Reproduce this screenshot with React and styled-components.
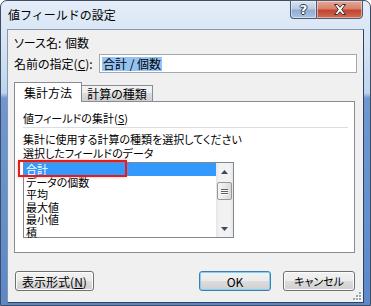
import React from 'react';
import styled, { createGlobalStyle } from 'styled-components';

const GlobalStyle = createGlobalStyle`
  html, body {
    margin: 0;
    padding: 0;
    background: #ffffff;
  }
  body {
    font-family: "Noto Sans CJK JP", "Noto Sans", sans-serif;
    font-size: 12px;
    color: #000000;
  }
`;

const Window = styled.div`
  box-sizing: border-box;
  width: 371px;
  height: 306px;
  display: flex;
  flex-direction: column;
  padding: 0 6px 7px;
  border: 1px solid #3e4d62;
  border-radius: 7px 7px 0 0;
  background: linear-gradient(
    to bottom,
    #e4edf8 0px,
    #d3e2f3 50px,
    #bdd3ee 92px,
    #6f98d2 97px,
    #5d88c8 100%
  );
`;

const TitleBar = styled.div`
  height: 28px;
  flex: none;
  display: flex;
  justify-content: space-between;
  align-items: flex-start;
`;

const Caption = styled.div`
  margin: 7px 0 0 1px;
  font-size: 12px;
  line-height: 14px;
  color: #000000;
`;

const Controls = styled.div`
  display: flex;
  margin: -1px 1px 0 0;
`;

const CaptionButton = styled.div`
  box-sizing: border-box;
  height: 19px;
  display: flex;
  align-items: center;
  justify-content: center;
  border: 1px solid #4b5b73;
  box-shadow: inset 0 0 0 1px rgba(255, 255, 255, 0.45);
`;

const HelpButton = styled(CaptionButton)`
  width: 26px;
  border-right: none;
  border-radius: 0 0 0 4px;
  background: linear-gradient(to bottom, #d9e4f1 0%, #b8cbe2 45%, #93acd0 55%, #a9c3e3 100%);
  color: #ffffff;
  font-family: "DejaVu Sans", sans-serif;
  font-weight: bold;
  font-size: 13px;
  text-shadow: 1px 0 0 #2a3a52, -1px 0 0 #2a3a52, 0 1px 0 #2a3a52, 0 -1px 0 #2a3a52;
`;

const CloseButton = styled(CaptionButton)`
  width: 47px;
  border-radius: 0 0 4px 0;
  background: linear-gradient(to bottom, #e8a797 0%, #d8816d 45%, #c24530 55%, #d26b52 100%);
`;

const Client = styled.div`
  flex: 1;
  display: flex;
  flex-direction: column;
  padding: 0 8px 0 6px;
  background: #f0f0f0;
  border: 1px solid #8797ad;
  border-right-color: #2e4262;
  border-bottom-color: #2e4262;
`;

const InfoRow = styled.div`
  display: flex;
  align-items: center;
  height: 14px;
  line-height: 14px;
  margin-top: 6px;
  font-feature-settings: "palt";
`;

const InfoLabel = styled.span`
  width: ${(p) => p.$width}px;
  flex: none;
`;

const NameRow = styled.div`
  display: flex;
  align-items: center;
  height: 19px;
  margin: 4px -2px 0 0;
  font-feature-settings: "palt";
`;

const NameInput = styled.div`
  box-sizing: border-box;
  flex: 1;
  height: 19px;
  display: flex;
  align-items: center;
  padding-left: 2px;
  background: #ffffff;
  border: 1px solid #a3a9b3;
`;

const Selection = styled.span`
  background: #93c3f3;
  line-height: 14px;
  padding: 0 1px;
`;

const Key = styled.span`
  text-decoration: underline;
`;

const TabStrip = styled.div`
  display: flex;
  align-items: flex-end;
  height: 19px;
  margin-top: 9px;
  font-feature-settings: "palt";
`;

const Tab = styled.div`
  box-sizing: border-box;
  position: relative;
  display: flex;
  align-items: center;
  justify-content: center;
  width: ${(p) => p.$width}px;
  border: 1px solid #898c95;
  ${(p) =>
    p.$active
      ? `
    height: 20px;
    margin-bottom: -1px;
    border-bottom: none;
    background: #ffffff;
    z-index: 1;
    padding-bottom: 1px;
  `
      : `
    height: 16px;
    border-left: none;
    border-bottom: none;
    background: linear-gradient(to bottom, #f3f3f3 0%, #ebebeb 50%, #dddddd 50%, #cfcfcf 100%);
  `}
`;

const Panel = styled.div`
  box-sizing: border-box;
  height: 152px;
  display: flex;
  flex-direction: column;
  padding: 9px 6px 0 8px;
  background: #ffffff;
  border: 1px solid #898c95;
  font-size: 11px;
  font-feature-settings: "palt";
`;

const TextLine = styled.div`
  height: 14px;
  line-height: 14px;
  white-space: nowrap;
`;

const Separator = styled.div`
  height: 1px;
  margin: 2px 0 4px;
  background: #d5dfe5;
`;

const ListBox = styled.div`
  position: relative;
  box-sizing: border-box;
  width: 211px;
  height: 76px;
  margin-top: 2px;
  display: flex;
  background: #ffffff;
  border: 1px solid #828790;
`;

const Items = styled.ul`
  flex: 1;
  margin: 0;
  padding: 0;
  list-style: none;
`;

const Item = styled.li`
  height: 12.5px;
  line-height: 12.5px;
  padding-left: 2px;
  font-size: 11px;
  background: ${(p) => (p.$selected ? '#3399ff' : 'transparent')};
  color: ${(p) => (p.$selected ? '#ffffff' : '#000000')};
`;

const ScrollBar = styled.div`
  width: 17px;
  flex: none;
  display: flex;
  flex-direction: column;
  align-items: center;
  background: linear-gradient(to right, #e6e6e6 0%, #f2f2f2 20%, #f2f2f2 80%, #e8e8e8 100%);
`;

const Arrow = styled.div`
  height: 17px;
  display: flex;
  align-items: center;
  justify-content: center;
`;

const Thumb = styled.div`
  box-sizing: border-box;
  width: 15px;
  height: 18px;
  margin-top: 2px;
  display: flex;
  flex-direction: column;
  align-items: center;
  justify-content: center;
  gap: 1px;
  border: 1px solid #979797;
  border-radius: 2px;
  background: linear-gradient(to right, #f5f5f5 0%, #e9e9e9 50%, #dadada 100%);
`;

const Grip = styled.span`
  width: 7px;
  height: 1px;
  background: #5f5f5f;
  box-shadow: 0 1px 0 #ffffff;
`;

const Track = styled.div`
  flex: 1;
`;

const Highlight = styled.div`
  position: absolute;
  left: -6px;
  top: -3px;
  width: 109px;
  height: 17px;
  box-sizing: border-box;
  border: 2px solid #e41c1f;
  box-shadow: 0 0 3px rgba(255, 110, 110, 0.55);
  pointer-events: none;
`;

const ButtonRow = styled.div`
  display: flex;
  align-items: center;
  margin-top: 18px;
  padding-left: 1px;
  font-feature-settings: "palt";
`;

const Button = styled.div`
  box-sizing: border-box;
  width: ${(p) => p.$width}px;
  height: 20px;
  display: flex;
  align-items: center;
  justify-content: center;
  margin-left: ${(p) => p.$offset || 0}px;
  font-size: ${(p) => p.$size || 12}px;
  border: 1px solid ${(p) => (p.$default ? '#3c7fb1' : '#707070')};
  border-radius: 3px;
  background: linear-gradient(to bottom, #f2f2f2 0%, #ebebeb 50%, #dddddd 50%, #cfcfcf 100%);
  box-shadow: inset 0 0 0 1px ${(p) => (p.$default ? '#7fd2f6' : '#fcfcfc')};
`;

const Footer = styled.div`
  flex: 1;
  display: flex;
  justify-content: flex-end;
  align-items: flex-end;
  margin-right: -8px;
  padding: 0 1px 1px 0;
`;

const CloseGlyph = () => (
  <svg width="14" height="11" viewBox="0 0 14 11">
    <path
      d="M1.5 0.5 H4.5 L7 3.3 L9.5 0.5 H12.5 L8.7 5.5 L12.5 10.5 H9.5 L7 7.7 L4.5 10.5 H1.5 L5.3 5.5 Z"
      fill="#ffffff"
      stroke="#3b2a2a"
      strokeWidth="1"
      strokeLinejoin="round"
    />
  </svg>
);

const UpArrow = () => (
  <svg width="7" height="4" viewBox="0 0 7 4">
    <path d="M0 4 L3.5 0 L7 4 Z" fill="#3d4a5e" />
  </svg>
);

const DownArrow = () => (
  <svg width="7" height="4" viewBox="0 0 7 4">
    <path d="M0 0 L7 0 L3.5 4 Z" fill="#3d4a5e" />
  </svg>
);

const SizeGrip = () => (
  <svg width="10" height="10" viewBox="0 0 10 10">
    {[
      [8, 2],
      [5, 5],
      [8, 5],
      [2, 8],
      [5, 8],
      [8, 8],
    ].map(([x, y]) => (
      <g key={`${x}-${y}`}>
        <rect x={x} y={y} width="2" height="2" fill="#ffffff" />
        <rect x={x - 1} y={y - 1} width="2" height="2" fill="#9aa3ae" />
      </g>
    ))}
  </svg>
);

const functions = ['合計', 'データの個数', '平均', '最大値', '最小値', '積'];

export default function App() {
  return (
    <>
      <GlobalStyle />
      <Window>
        <TitleBar>
          <Caption>値フィールドの設定</Caption>
          <Controls>
            <HelpButton>?</HelpButton>
            <CloseButton>
              <CloseGlyph />
            </CloseButton>
          </Controls>
        </TitleBar>
        <Client>
          <InfoRow>
            <InfoLabel $width={51}>ソース名:</InfoLabel>
            <span>個数</span>
          </InfoRow>
          <NameRow>
            <InfoLabel $width={85}>
              名前の指定(<Key>C</Key>):
            </InfoLabel>
            <NameInput>
              <Selection>合計 / 個数</Selection>
            </NameInput>
          </NameRow>
          <TabStrip>
            <Tab $active $width={68}>
              集計方法
            </Tab>
            <Tab $width={71}>計算の種類</Tab>
          </TabStrip>
          <Panel>
            <TextLine>
              値フィールドの集計(<Key>S</Key>)
            </TextLine>
            <Separator />
            <TextLine>集計に使用する計算の種類を選択してください</TextLine>
            <TextLine>選択したフィールドのデータ</TextLine>
            <ListBox>
              <Items>
                {functions.map((name, i) => (
                  <Item key={name} $selected={i === 0}>
                    {name}
                  </Item>
                ))}
              </Items>
              <ScrollBar>
                <Arrow>
                  <UpArrow />
                </Arrow>
                <Thumb>
                  <Grip />
                  <Grip />
                  <Grip />
                </Thumb>
                <Track />
                <Arrow>
                  <DownArrow />
                </Arrow>
              </ScrollBar>
              <Highlight />
            </ListBox>
          </Panel>
          <ButtonRow>
            <Button $width={79}>
              表示形式(<Key>N</Key>)
            </Button>
            <Button $width={72} $offset={105} $default>
              OK
            </Button>
            <Button $width={72} $offset={12} $size={11}>
              キャンセル
            </Button>
          </ButtonRow>
          <Footer>
            <SizeGrip />
          </Footer>
        </Client>
      </Window>
    </>
  );
}
